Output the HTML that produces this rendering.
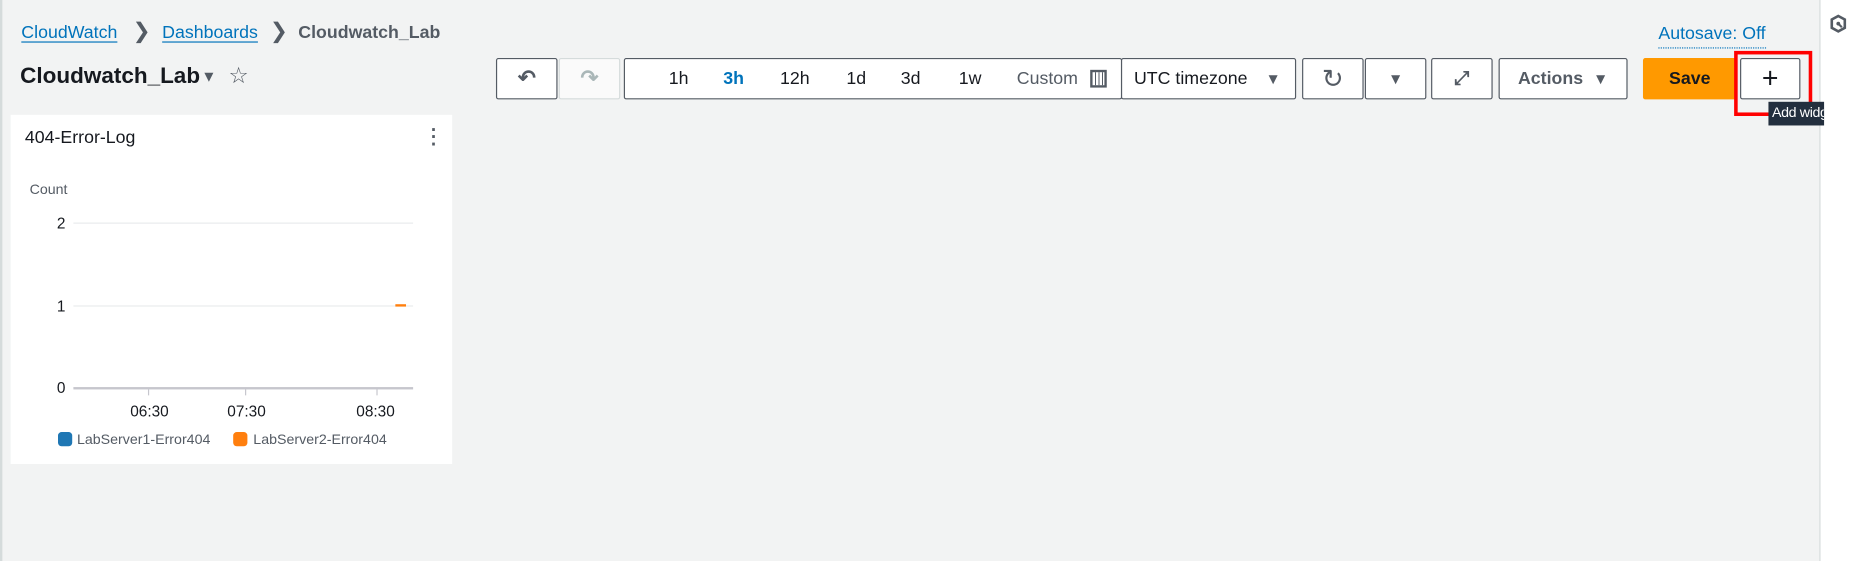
<!DOCTYPE html>
<html><head><meta charset="utf-8"><style>
*{box-sizing:border-box;margin:0;padding:0}
html,body{width:1856px;height:561px;overflow:hidden}
body{background:#f2f3f3;font-family:"Liberation Sans",sans-serif;color:#16191f}
#w{position:absolute;left:0;top:0;width:1568px;height:474px;transform:scale(1.1837);transform-origin:0 0}
.a{position:absolute}
.btn{position:absolute;top:49px;height:35px;background:#fff;border:1px solid #545b64;border-radius:2px;display:flex;align-items:center;justify-content:center;font-size:15px;font-weight:bold;color:#545b64}
.lnk{color:#0073bb;text-decoration:underline;text-underline-offset:3px}
.t{position:absolute;top:58px;font-size:15px;color:#16191f}
</style></head><body><div id="w">
<div class="a" style="left:0;top:0;width:2px;height:474px;background:#d5dbdb"></div>
<div class="a" style="left:18px;top:19px;font-size:15px"><span class="lnk">CloudWatch</span></div>
<div class="a" style="left:112px;top:16px;font-size:18px;color:#545b64">&#x276F;</div>
<div class="a" style="left:137px;top:19px;font-size:15px"><span class="lnk">Dashboards</span></div>
<div class="a" style="left:228px;top:16px;font-size:18px;color:#545b64">&#x276F;</div>
<div class="a" style="left:252px;top:19px;font-size:15px;color:#545b64;font-weight:bold">Cloudwatch_Lab</div>
<div class="a" style="left:17px;top:54px;font-size:19px;font-weight:bold">Cloudwatch_Lab</div>
<div class="a" style="left:170px;top:57px;font-size:13px;color:#545b64">&#9660;</div>
<div class="a" style="left:193px;top:53px;font-size:19px;color:#545b64">&#9734;</div>
<div class="a" style="left:1401px;top:20px;font-size:15px;color:#0073bb;border-bottom:1px dotted #0073bb;padding-bottom:3px">Autosave: Off</div>

<div class="btn" style="left:419px;width:52px;font-size:18px">&#x21B6;</div>
<div class="btn" style="left:472px;width:52px;border-color:#d5dbdb;color:#aab7b8;font-size:18px;background:#fafafa">&#x21B7;</div>
<div class="btn" style="left:527px;width:421px"></div>
<div class="t" style="left:565px">1h</div>
<div class="t" style="left:611px;color:#0073bb;font-weight:bold">3h</div>
<div class="t" style="left:659px">12h</div>
<div class="t" style="left:715px">1d</div>
<div class="t" style="left:761px">3d</div>
<div class="t" style="left:810px">1w</div>
<div class="t" style="left:859px;color:#545b64">Custom</div>
<div class="a" style="left:921px;top:59px;width:14px;height:15px;border:2px solid #545b64;background:repeating-linear-gradient(90deg,#fff 0 2px,#545b64 2px 3px)"></div>
<div class="btn" style="left:947px;width:148px;justify-content:space-between;padding:0 12px 0 10px;font-weight:normal;color:#16191f"><span>UTC timezone</span><span style="font-size:13px;color:#545b64">&#9660;</span></div>
<div class="btn" style="left:1100px;width:52px;font-size:22px;font-weight:normal">&#x21BB;</div>
<div class="btn" style="left:1153px;width:52px;font-size:13px">&#9660;</div>
<div class="btn" style="left:1209px;width:52px;font-size:16px">&#x2922;</div>
<div class="btn" style="left:1266px;width:109px">Actions&nbsp;&nbsp;<span style="font-size:13px">&#9660;</span></div>
<div class="btn" style="left:1388px;width:79px;background:#ff9900;border-color:#ff9900;color:#16191f">Save</div>
<div class="btn" style="left:1470px;width:51px;font-size:24px;font-weight:normal;color:#16191f">+</div>

<div class="a" style="left:1537px;top:0;width:31px;height:474px;background:#fff;border-left:1px solid #d5dbdb"></div>
<svg class="a" style="left:1546px;top:12px" width="14" height="16" viewBox="0 0 14 16"><polygon points="7,1.5 12.5,4.5 12.5,11.5 7,14.5 1.5,11.5 1.5,4.5" fill="none" stroke="#545b64" stroke-width="2.2"/><circle cx="7" cy="8" r="1.6" fill="#545b64"/><line x1="7" y1="8" x2="10" y2="11" stroke="#545b64" stroke-width="1.8"/></svg>
<div class="a" style="left:1465px;top:43px;width:66px;height:55px;border:3px solid #ff0000"></div>
<div class="a" style="left:1494px;top:86px;width:47px;height:20px;background:#232f3e;color:#fff;font-size:12px;padding:2px 3px;white-space:nowrap;overflow:hidden;letter-spacing:-0.3px">Add widget</div>

<div class="a" style="left:9px;top:97px;width:373px;height:295px;background:#fff"></div>
<div class="a" style="left:21px;top:108px;font-size:15px">404-Error-Log</div>
<div class="a" style="left:364px;top:108px;font-size:16px;color:#545b64;font-weight:bold;line-height:6px">&#183;<br>&#183;<br>&#183;</div>
<div class="a" style="left:25px;top:153px;font-size:12px;color:#545b64">Count</div>
<div class="a" style="left:48px;top:181px;font-size:13px">2</div>
<div class="a" style="left:48px;top:251px;font-size:13px">1</div>
<div class="a" style="left:48px;top:320px;font-size:13px">0</div>
<div class="a" style="left:62px;top:188px;width:287px;height:1px;background:#e9ebed"></div>
<div class="a" style="left:62px;top:258px;width:287px;height:1px;background:#e9ebed"></div>
<div class="a" style="left:62px;top:327px;width:287px;height:2px;background:#c6c6cd"></div>
<div class="a" style="left:125px;top:329px;width:1px;height:5px;background:#c6c6cd"></div>
<div class="a" style="left:207px;top:329px;width:1px;height:5px;background:#c6c6cd"></div>
<div class="a" style="left:318px;top:329px;width:1px;height:5px;background:#c6c6cd"></div>
<div class="a" style="left:334px;top:257px;width:9px;height:2px;background:#ff7f0e"></div>
<div class="a" style="left:110px;top:340px;font-size:13px">06:30</div>
<div class="a" style="left:192px;top:340px;font-size:13px">07:30</div>
<div class="a" style="left:301px;top:340px;font-size:13px">08:30</div>
<div class="a" style="left:49px;top:365px;width:12px;height:12px;border-radius:3px;background:#1f77b4"></div>
<div class="a" style="left:65px;top:364px;font-size:12px;color:#545b64">LabServer1-Error404</div>
<div class="a" style="left:197px;top:365px;width:12px;height:12px;border-radius:3px;background:#ff7f0e"></div>
<div class="a" style="left:214px;top:364px;font-size:12px;color:#545b64">LabServer2-Error404</div>
</div></body></html>
